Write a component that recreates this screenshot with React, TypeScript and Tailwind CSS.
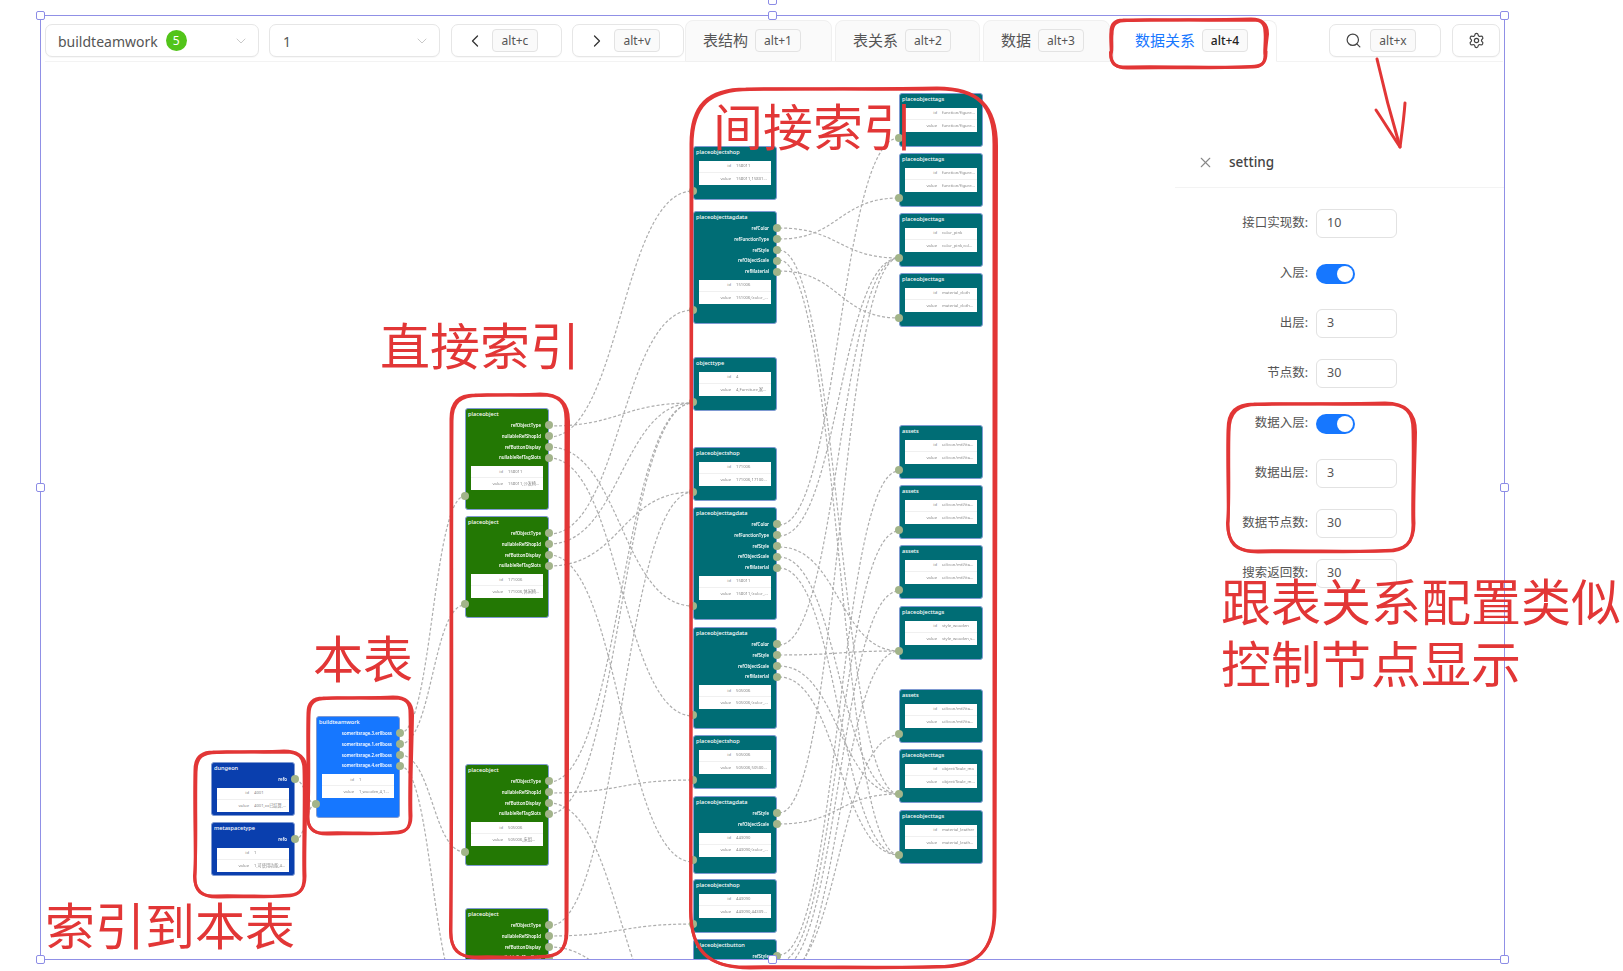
import { ChevronDown, ChevronLeft, ChevronRight, Search, Settings, X } from "lucide-react";

const Kbd = ({ children, dark = false }: { children: string; dark?: boolean }) => (
  <span className={`w-[46px] h-[23px] flex items-center justify-center rounded-[4px] border border-[#e3e3e3] bg-[#fafafa] text-[12px] shrink-0 ${dark ? "text-[#222] font-medium" : "text-[#555]"}`}>
    {children}
  </span>
);

const Box = ({ w, children, extra = "" }: { w: string; children: React.ReactNode; extra?: string }) => (
  <div className={`${w} h-[33px] shrink-0 flex items-center rounded-[7px] border border-[#e6e6e6] bg-white shadow-[0_1px_1px_rgba(0,0,0,0.03)] ${extra}`}>
    {children}
  </div>
);

const Tab = ({ w, text, k, active = false, pl = "pl-[17px]" }: { w: string; text: string; k: string; active?: boolean; pl?: string }) => (
  <div
    className={`${w} ${pl} h-[42px] shrink-0 flex items-center gap-[7px] rounded-t-[8px] border border-[#f0f0f0] text-[15px] ${
      active ? "bg-white border-b-white text-[#1677ff]" : "bg-[#fafafa] text-[#555]"
    }`}
  >
    <span>{text}</span>
    <Kbd dark={active}>{k}</Kbd>
  </div>
);

type NodeT = { x: number; y: number; h: number; c: string; t: string; rows?: string[]; id: string; v: string; inPort?: number };

const Port = ({ cls }: { cls: string }) => <span className={`absolute w-[8px] h-[8px] rounded-full bg-[#a2b48a] ${cls}`} />;

const GraphNode = ({ n, top }: { n: NodeT; top: number }) => {
  const hasRows = (n.rows || []).length > 0;
  return (
    <div
      className="absolute w-[84px] rounded-[3px] border border-[#7f9ad2] text-white"
      style={{ left: n.x, top: n.y - top, height: n.h, backgroundColor: n.c }}
    >
      <div className="h-[11px] pl-[2px] text-[5.6px] leading-[11px] font-medium">{n.t}</div>
      {(n.rows || []).map((r) => (
        <div key={r} className="relative h-[10.8px] pr-[7px] text-right text-[4.4px] leading-[10.8px] font-semibold">
          {r}
          <Port cls="right-[-5px] top-[1.4px]" />
        </div>
      ))}
      <div className="mx-[5px] mt-[3px] h-[24px] bg-white text-[4.2px] text-[#888]">
        <div className="flex h-[12px] items-center border-b border-[#f0f0f0]">
          <span className="w-[32px] text-right">id</span>
          <span className="ml-[5px] truncate w-[34px]">{n.id}</span>
        </div>
        <div className="flex h-[12px] items-center">
          <span className="w-[32px] text-right">value</span>
          <span className="ml-[5px] truncate w-[34px]">{n.v}</span>
        </div>
      </div>
      {n.inPort !== undefined && <Port cls={hasRows ? "left-[-5px] bottom-[9px]" : "left-[-5px] bottom-[4px]"} />}
    </div>
  );
};

const Blue = "#1677ff", Navy = "#0a3fae", Green = "#237804", Teal = "#006d75";
const rows5 = ["refColor", "refFunctionType", "refStyle", "refObjectScale", "refMaterial"];
const rowsG4 = ["refObjectType", "nullableRefShopId", "refButtonDisplay", "nullableRefTagSlots"];
const rowsB = ["someritsrage.3.erllboss", "someritsrage.1.erllboss", "someritsrage.2.erllboss", "someritsrage.4.erllboss"];

const nodes: NodeT[] = [
  { x: 211, y: 762, h: 54, c: Navy, t: "dungeon", rows: ["refo"], id: "4001", v: "4001,xx已结算,4..." },
  { x: 211, y: 822, h: 54, c: Navy, t: "metaspacetype", rows: ["refo"], id: "1", v: "1,可使用功能,4..." },
  { x: 316, y: 716, h: 102, c: Blue, t: "buildteamwork", rows: rowsB, id: "1", v: "1,wooden,4,1...", inPort: 1 },
  { x: 465, y: 408, h: 102, c: Green, t: "placeobject", rows: rowsG4, id: "158011", v: "158011,沙发椅子...", inPort: 1 },
  { x: 465, y: 516, h: 102, c: Green, t: "placeobject", rows: rowsG4, id: "171006", v: "171006,休闲椅...", inPort: 1 },
  { x: 465, y: 764, h: 102, c: Green, t: "placeobject", rows: rowsG4, id: "505006", v: "505006,床组...", inPort: 1 },
  { x: 465, y: 908, h: 102, c: Green, t: "placeobject", rows: rowsG4, id: "443090", v: "443090,床组...", inPort: 1 },
  { x: 693, y: 146, h: 54, c: Teal, t: "placeobjectshop", id: "158011", v: "158011,15801...", inPort: 1 },
  { x: 693, y: 211, h: 113, c: Teal, t: "placeobjecttagdata", rows: rows5, id: "151006", v: "151006,(color_...", inPort: 1 },
  { x: 693, y: 357, h: 54, c: Teal, t: "objecttype", id: "4", v: "4,Furniture,家...", inPort: 1 },
  { x: 693, y: 447, h: 54, c: Teal, t: "placeobjectshop", id: "171006", v: "171006,17100...", inPort: 1 },
  { x: 693, y: 507, h: 113, c: Teal, t: "placeobjecttagdata", rows: rows5, id: "158011", v: "158011,(color_...", inPort: 1 },
  { x: 693, y: 627, h: 102, c: Teal, t: "placeobjecttagdata", rows: ["refColor", "refStyle", "refObjectScale", "refMaterial"], id: "505006", v: "505006,(color_...", inPort: 1 },
  { x: 693, y: 735, h: 54, c: Teal, t: "placeobjectshop", id: "505006", v: "505006,50500...", inPort: 1 },
  { x: 693, y: 796, h: 78, c: Teal, t: "placeobjecttagdata", rows: ["refStyle", "refObjectScale"], id: "443090", v: "443090,(color_...", inPort: 1 },
  { x: 693, y: 879, h: 54, c: Teal, t: "placeobjectshop", id: "443090", v: "443090,44309...", inPort: 1 },
  { x: 693, y: 939, h: 102, c: Teal, t: "placeobjectbutton", rows: ["refStyle", "refColor"], id: "1", v: "1", inPort: 1 },
  { x: 899, y: 93, h: 54, c: Teal, t: "placeobjecttags", id: "function/figure_y...", v: "function/figure_y...", inPort: 1 },
  { x: 899, y: 153, h: 54, c: Teal, t: "placeobjecttags", id: "function/figure_s...", v: "function/figure_s...", inPort: 1 },
  { x: 899, y: 213, h: 54, c: Teal, t: "placeobjecttags", id: "color_pink", v: "color_pink,col...", inPort: 1 },
  { x: 899, y: 273, h: 54, c: Teal, t: "placeobjecttags", id: "material_cloth", v: "material_cloth...", inPort: 1 },
  { x: 899, y: 425, h: 54, c: Teal, t: "assets", id: "ui/icon/mtl/ita...", v: "ui/icon/mtl/ita...", inPort: 1 },
  { x: 899, y: 485, h: 54, c: Teal, t: "assets", id: "ui/icon/mtl/ita...", v: "ui/icon/mtl/ita...", inPort: 1 },
  { x: 899, y: 545, h: 54, c: Teal, t: "assets", id: "ui/icon/mtl/ita...", v: "ui/icon/mtl/ita...", inPort: 1 },
  { x: 899, y: 606, h: 54, c: Teal, t: "placeobjecttags", id: "style_wooden", v: "style_wooden,s...", inPort: 1 },
  { x: 899, y: 689, h: 54, c: Teal, t: "assets", id: "ui/icon/mtl/ita...", v: "ui/icon/mtl/ita...", inPort: 1 },
  { x: 899, y: 749, h: 54, c: Teal, t: "placeobjecttags", id: "object/Scale_mo", v: "object/Scale_mo...", inPort: 1 },
  { x: 899, y: 810, h: 54, c: Teal, t: "placeobjecttags", id: "material_leather", v: "material_leath...", inPort: 1 },
];

// [x1, y1, x2, y2]
const edges: number[][] = [
  [295, 780, 316, 804], [295, 840, 316, 804],
  [400, 733, 465, 496], [400, 744, 465, 605], [400, 755, 465, 852], [400, 766, 465, 1000],
  [549, 426, 693, 403], [549, 437, 693, 191], [549, 447, 693, 606], [549, 458, 693, 716],
  [549, 534, 693, 310], [549, 544, 693, 403], [549, 555, 693, 862], [549, 566, 693, 492],
  [549, 782, 693, 403], [549, 793, 693, 780], [549, 803, 693, 1040], [549, 814, 693, 403],
  [549, 926, 693, 492], [549, 936, 693, 924], [549, 947, 693, 1040],
  [779, 228, 899, 258], [779, 239, 899, 198], [779, 250, 899, 794], [779, 260, 899, 855], [779, 271, 899, 318],
  [779, 525, 899, 138], [779, 536, 899, 258], [779, 547, 899, 651], [779, 557, 899, 794], [779, 568, 899, 855],
  [779, 645, 899, 258], [779, 655, 899, 651], [779, 666, 899, 794], [779, 677, 899, 855],
  [779, 813, 899, 258], [779, 824, 899, 794],
  [779, 955, 899, 471], [779, 962, 899, 531], [779, 969, 899, 591], [779, 976, 899, 735], [779, 983, 899, 651],
];

const blob = (a: number, b: number, c: number, d: number, r: number, j = 0) =>
  `M${a + r} ${b + j} C${a + (c - a) * 0.35} ${b - 1 + j} ${a + (c - a) * 0.65} ${b + 1} ${c - r} ${b} C${c - r * 0.3} ${b} ${c + j} ${b + r * 0.3} ${c + j} ${b + r} C${c + 1} ${b + (d - b) * 0.4} ${c - 1} ${b + (d - b) * 0.7} ${c} ${d - r} C${c} ${d - r * 0.3} ${c - r * 0.3} ${d - j} ${c - r} ${d - j} C${a + (c - a) * 0.65} ${d + 1} ${a + (c - a) * 0.35} ${d - 1} ${a + r} ${d} C${a + r * 0.3} ${d} ${a - j} ${d - r * 0.3} ${a - j} ${d - r} C${a + 1} ${b + (d - b) * 0.7} ${a - 1} ${b + (d - b) * 0.4} ${a} ${b + r} C${a} ${b + r * 0.3} ${a + r * 0.3} ${b + j} ${a + r} ${b + j}`;

const loops = [
  [1111, 20, 1265, 67, 12], [691, 89, 994, 967, 55], [451, 395, 566, 957, 24],
  [308, 698, 410, 833, 15], [195, 752, 304, 896, 18], [1228, 404, 1413, 551, 26],
];

const Handle = ({ cls }: { cls: string }) => (
  <span className={`absolute w-[9px] h-[9px] rounded-[2px] border border-[#8c8ce6] bg-white ${cls}`} />
);

const fields: { l: string; v?: string }[] = [
  { l: "接口实现数", v: "10" },
  { l: "入层" },
  { l: "出层", v: "3" },
  { l: "节点数", v: "30" },
  { l: "数据入层" },
  { l: "数据出层", v: "3" },
  { l: "数据节点数", v: "30" },
  { l: "搜索返回数", v: "30" },
];

const Note = ({ cls, children }: { cls: string; children: string }) => (
  <span className={`absolute whitespace-nowrap text-[#e23636] leading-none ${cls}`}>{children}</span>
);

export default function App() {
  const top = 62;
  return (
    <div className="relative w-[1623px] h-[971px] overflow-hidden bg-white font-['Noto_Sans','Noto_Sans_CJK_SC',sans-serif]">
      <div className="pt-[20px] pl-[45px] w-[1503px]">
        <div className="flex items-center h-[42px] border-b border-[#f3f3f3]">
          <Box w="w-[214px]" extra="pl-[12px] pr-[9px] mr-[10px]">
            <span className="text-[14px] text-[#555] pt-[1px]">buildteamwork</span>
            <span className="ml-[8px] w-[21px] h-[21px] rounded-full bg-[#52c41a] text-white text-[12px] flex items-center justify-center">5</span>
            <ChevronDown className="ml-auto text-[#bbb]" size={16} strokeWidth={1.2} />
          </Box>
          <Box w="w-[171px]" extra="pl-[13px] pr-[9px] mr-[11px]">
            <span className="text-[14px] text-[#555] pt-[1px]">1</span>
            <ChevronDown className="ml-auto text-[#bbb]" size={16} strokeWidth={1.2} />
          </Box>
          <Box w="w-[111px]" extra="pl-[13px] gap-[7px] mr-[10px]">
            <ChevronLeft className="text-[#333]" size={20} strokeWidth={1.5} />
            <Kbd>alt+c</Kbd>
          </Box>
          <Box w="w-[112px]" extra="pl-[14px] gap-[7px] mr-[1px]">
            <ChevronRight className="text-[#333]" size={20} strokeWidth={1.5} />
            <Kbd>alt+v</Kbd>
          </Box>
          <div className="flex gap-[3px]">
            <Tab w="w-[147px]" text="表结构" k="alt+1" />
            <Tab w="w-[145px]" text="表关系" k="alt+2" />
            <Tab w="w-[127px]" text="数据" k="alt+3" />
            <Tab w="w-[164px]" text="数据关系" k="alt+4" active pl="pl-[21px]" />
          </div>
          <Box w="w-[112px]" extra="ml-[52px] pl-[15px] gap-[8px]">
            <Search className="text-[#444]" size={17} strokeWidth={1.7} />
            <Kbd>alt+x</Kbd>
          </Box>
          <Box w="w-[48px]" extra="ml-[11px] justify-center">
            <Settings className="text-[#444]" size={17} strokeWidth={1.7} />
          </Box>
        </div>
      </div>

      <div className="flex">
        <div className="relative w-[1175px] h-[897px] overflow-hidden blur-[0.25px]">
          <svg className="absolute inset-0" width="1175" height="897" viewBox={`0 ${top} 1175 897`} fill="none">
            {edges.map(([a, b, c, d], i) => {
              const m = (a + c) / 2;
              return <path key={i} d={`M${a} ${b} C${m} ${b} ${m} ${d} ${c} ${d}`} stroke="#adadad" strokeWidth="1.2" strokeDasharray="3 2" />;
            })}
          </svg>
          {nodes.map((n, i) => (
            <GraphNode key={i} n={n} top={top} />
          ))}
        </div>

        <div className="w-[330px] pt-[76px]">
          <div className="h-[50px] flex items-center pl-[22px] gap-[15px] border-b border-[#f3f3f3]">
            <X className="text-[#888]" size={17} strokeWidth={1.5} />
            <span className="text-[13.5px] font-medium text-[#444]">setting</span>
          </div>
          <div className="pt-[21px] flex flex-col gap-[21px]">
            {fields.map((f) => (
              <div key={f.l} className="flex items-center h-[29px] gap-[8px]">
                <span className="w-[133px] text-right text-[12.5px] text-[#555]">{f.l}:</span>
                {f.v !== undefined ? (
                  <div className="w-[81px] h-[29px] flex items-center pl-[10px] rounded-[6px] border border-[#e2e2e2] text-[12.5px] text-[#555]">{f.v}</div>
                ) : (
                  <div className="w-[39px] h-[20px] rounded-full bg-[#1677ff] flex items-center justify-end pr-[2px]">
                    <span className="w-[16px] h-[16px] rounded-full bg-white" />
                  </div>
                )}
              </div>
            ))}
          </div>
        </div>
      </div>

      {/* selection frame drawn over the picture */}
      <div className="absolute left-[40px] top-[15px] w-[1465px] h-[945px] border border-[#9090e6] pointer-events-none">
        <Handle cls="left-[-5px] top-[-5px]" />
        <Handle cls="left-[727px] top-[-5px]" />
        <Handle cls="left-[727px] top-[-20px]" />
        <Handle cls="right-[-5px] top-[-5px]" />
        <Handle cls="left-[-5px] top-[467px]" />
        <Handle cls="right-[-5px] top-[467px]" />
        <Handle cls="left-[-5px] bottom-[-5px]" />
        <Handle cls="left-[727px] bottom-[-5px]" />
        <Handle cls="right-[-5px] bottom-[-5px]" />
      </div>

      {/* red pen annotations */}
      <svg className="absolute inset-0 pointer-events-none" width="1623" height="971" fill="none">
        {loops.map(([a, b, c, d, r], i) => (
          <g key={i} stroke="#e23636" strokeWidth="3" strokeLinecap="round">
            <path d={blob(a, b, c, d, r)} />
            <path d={blob(a + 1, b - 1, c + 1, d + 1, r + 3, 1.5)} />
          </g>
        ))}
        <g stroke="#e23636" strokeWidth="3" strokeLinecap="round" strokeLinejoin="round">
          <path d="M1377 59 C1384 90 1392 120 1400 147" />
          <path d="M1376 110 C1384 122 1392 135 1400 147 C1402 132 1404 118 1405 103" />
        </g>
      </svg>
      <Note cls="left-[713px] top-[102px] text-[50px]">间接索引</Note>
      <Note cls="left-[380px] top-[321px] text-[50px]">直接索引</Note>
      <Note cls="left-[313px] top-[634px] text-[50px]">本表</Note>
      <Note cls="left-[45px] top-[901px] text-[50px]">索引到本表</Note>
      <Note cls="left-[1221px] top-[577px] text-[50px]">跟表关系配置类似</Note>
      <Note cls="left-[1221px] top-[639px] text-[50px]">控制节点显示</Note>
    </div>
  );
}
